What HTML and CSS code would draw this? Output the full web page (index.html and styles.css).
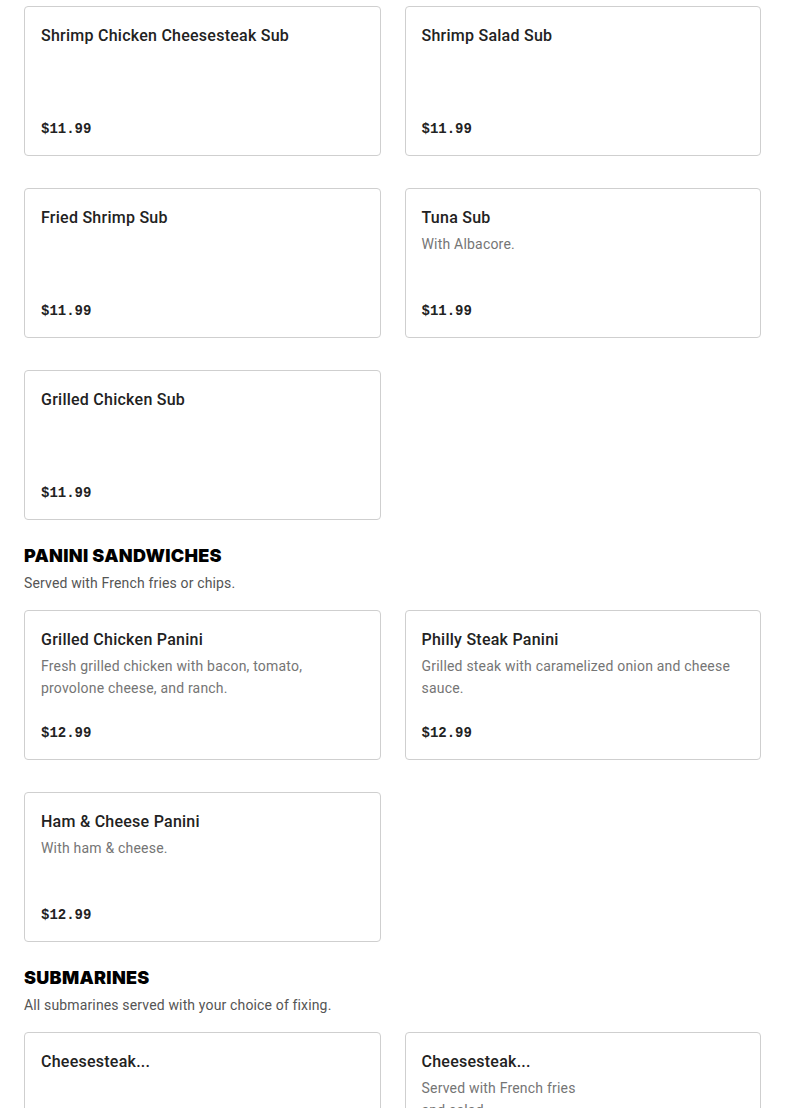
FILE: index.html
```html
<!DOCTYPE html>
<html>
<head>
<meta charset="utf-8">
<link rel="stylesheet" href="styles.css">
</head>
<body>
<main class="menu">
  <section class="section first">
    <div class="grid">
      <div class="card"><div class="card-body"><h3 class="title">Shrimp Chicken Cheesesteak Sub</h3></div><div class="price">$11.99</div></div>
      <div class="card"><div class="card-body"><h3 class="title">Shrimp Salad Sub</h3></div><div class="price">$11.99</div></div>
      <div class="card"><div class="card-body"><h3 class="title">Fried Shrimp Sub</h3></div><div class="price">$11.99</div></div>
      <div class="card"><div class="card-body"><h3 class="title">Tuna Sub</h3><p class="desc">With Albacore.</p></div><div class="price">$11.99</div></div>
      <div class="card"><div class="card-body"><h3 class="title">Grilled Chicken Sub</h3></div><div class="price">$11.99</div></div>
    </div>
  </section>
  <section class="section">
    <h2 class="section-title">PANINI SANDWICHES</h2>
    <p class="section-desc">Served with French fries or chips.</p>
    <div class="grid">
      <div class="card"><div class="card-body"><h3 class="title">Grilled Chicken Panini</h3><p class="desc">Fresh grilled chicken with bacon, tomato, provolone cheese, and ranch.</p></div><div class="price">$12.99</div></div>
      <div class="card"><div class="card-body"><h3 class="title">Philly Steak Panini</h3><p class="desc">Grilled steak with caramelized onion and cheese sauce.</p></div><div class="price">$12.99</div></div>
      <div class="card"><div class="card-body"><h3 class="title">Ham &amp; Cheese Panini</h3><p class="desc">With ham &amp; cheese.</p></div><div class="price">$12.99</div></div>
    </div>
  </section>
  <section class="section">
    <h2 class="section-title">SUBMARINES</h2>
    <p class="section-desc">All submarines served with your choice of fixing.</p>
    <div class="grid">
      <div class="card"><div class="card-body"><h3 class="title">Cheesesteak...</h3></div><div class="price">$10.99</div></div>
      <div class="card"><div class="card-body"><h3 class="title">Cheesesteak...</h3><p class="desc narrow">Served with French fries and salad.</p></div><div class="price">$10.99</div></div>
    </div>
  </section>
</main>
</body>
</html>
```

FILE: styles.css
```css
html, body {
  margin: 0;
  padding: 0;
  background: #fff;
}
body {
  font-family: "Roboto", "Liberation Sans", sans-serif;
  color: #222;
}
.menu {
  padding: 6px 24px 24px 24px;
}
.section {
  margin-top: 24px;
}
.section.first {
  margin-top: 0;
}
.section-title {
  margin: 0 0 4px 0;
  font-family: "Inter", "Roboto", sans-serif;
  font-size: 18px;
  line-height: 24px;
  font-weight: 900;
  color: #000;
  letter-spacing: 0.3px;
}
.section-desc {
  margin: 0 0 16px 0;
  font-size: 14px;
  line-height: 22px;
  color: #555;
  letter-spacing: 0.15px;
}
.grid {
  display: grid;
  grid-template-columns: 1fr 1fr;
  column-gap: 24px;
  row-gap: 32px;
}
.card {
  box-sizing: border-box;
  height: 150px;
  border: 1px solid #cfcfcf;
  border-radius: 4px;
  padding: 16px 16px 15px 16px;
  display: flex;
  flex-direction: column;
  justify-content: space-between;
}
.title {
  margin: 0;
  padding-top: 1px;
  font-size: 16px;
  line-height: 24px;
  font-weight: 500;
  color: #222;
  letter-spacing: 0.25px;
}
.desc {
  margin: 3px 0 0 0;
  font-size: 14px;
  line-height: 22px;
  color: #757575;
  letter-spacing: 0.2px;
}
.desc.narrow {
  max-width: 170px;
}
.price {
  font-family: "Liberation Mono", "DejaVu Sans Mono", monospace;
  font-weight: 700;
  font-size: 14px;
  line-height: 22px;
  color: #222;
}
```
